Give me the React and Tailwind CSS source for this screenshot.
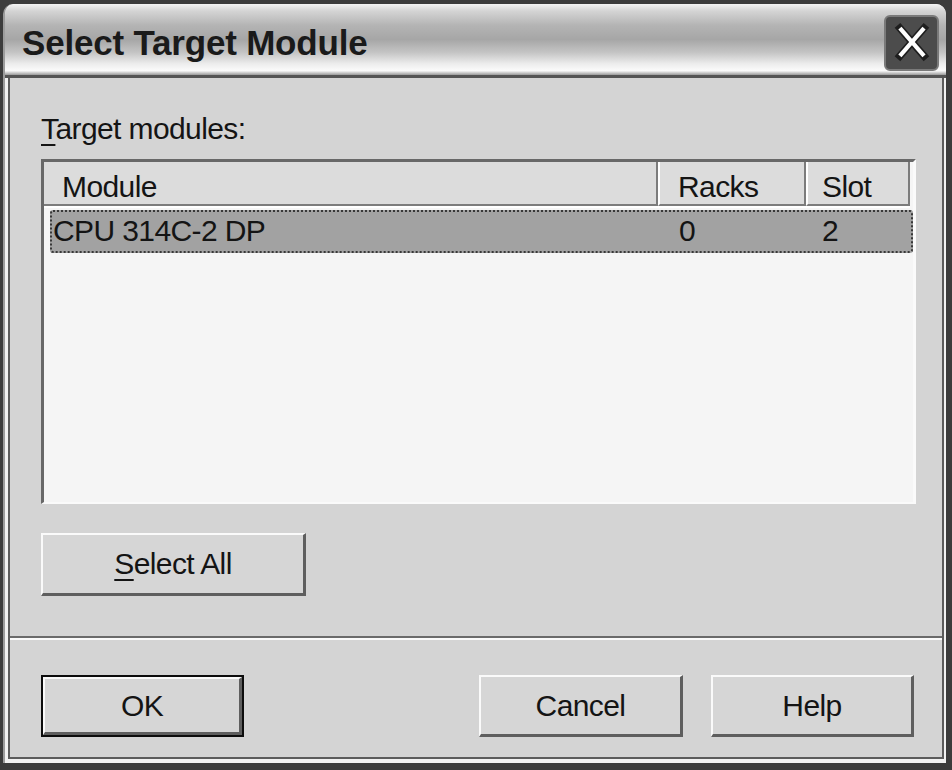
import React from 'react';

const btn3d =
  'flex items-center justify-center bg-[#d6d6d6] border-t-2 border-l-2 border-t-[#fafafa] border-l-[#fafafa] border-r-[3px] border-b-[3px] border-r-[#5e5e5e] border-b-[#5e5e5e]';

const CloseIcon = () => (
  <svg width="55" height="56" viewBox="0 0 55 56">
    <line x1="15" y1="12" x2="41" y2="42" stroke="#1e1e1e" strokeWidth="8" strokeLinecap="square" />
    <line x1="41" y1="12" x2="15" y2="42" stroke="#1e1e1e" strokeWidth="8" strokeLinecap="square" />
    <line x1="15" y1="12" x2="41" y2="42" stroke="#ffffff" strokeWidth="4.5" />
    <line x1="41" y1="12" x2="15" y2="42" stroke="#ffffff" strokeWidth="4.5" />
  </svg>
);

const App = () => {
  return (
    <div className="w-[952px] h-[770px] bg-[#3c3c3c] pt-[4px] pl-[3px] pr-[6px] pb-[7px] font-['Liberation_Sans',Arial,sans-serif] text-[#141414] overflow-hidden">
      <div className="h-full flex flex-col bg-[#f2f2f2] rounded-t-[10px] border-l-2 border-[#9c9c9c]">
        {/* Title bar */}
        <div className="h-[74px] shrink-0 flex items-start justify-between rounded-t-[10px] border-b-[3px] border-[#555555] bg-[linear-gradient(to_bottom,#f4f4f4_0%,#d4d4d4_10%,#b4b4b4_30%,#a6a6a6_50%,#c4c4c4_68%,#ececec_84%,#fbfbfb_94%,#9a9a9a_100%)]">
          <span className="pl-[17px] pt-[19px] text-[35px] leading-[40px] font-bold text-[#1a1a1a] tracking-[-0.2px]">
            Select Target Module
          </span>
          <div className="mt-[11px] mr-[7px] w-[55px] h-[56px] rounded-[6px] bg-[#4c4c4c] border-2 border-[#7a7a7a] flex items-center justify-center overflow-hidden">
            <CloseIcon />
          </div>
        </div>

        {/* Client area */}
        <div className="flex-1 flex flex-col ml-[3px] mr-[2px] mb-[4px] bg-[#d4d4d4] border-l-2 border-r-2 border-b-2 border-[#5c5c5c] text-[30px] tracking-[-0.6px]">
          <div className="mt-[34px] ml-[31px] leading-[34px]">
            <span className="underline underline-offset-[5px] decoration-2">T</span>arget modules:
          </div>

          {/* List box */}
          <div className="mt-[13px] ml-[31px] w-[875px] h-[345px] shrink-0 bg-[#f5f5f5] border-t-[3px] border-l-[3px] border-t-[#686868] border-l-[#686868] border-r-[3px] border-b-[2px] border-r-[#fafafa] border-b-[#fafafa]">
            <div className="flex h-[46px] w-[866px] border-b-2 border-white">
              <div className="w-[614px] h-[44px] bg-[#dcdcdc] border-r-2 border-b-2 border-[#7c7c7c] pl-[18px] pt-[8px] leading-[34px]">
                Module
              </div>
              <div className="w-[148px] h-[44px] bg-[#dcdcdc] border-l-2 border-l-white border-r-2 border-b-2 border-r-[#7c7c7c] border-b-[#7c7c7c] pl-[18px] pt-[8px] leading-[34px]">
                Racks
              </div>
              <div className="w-[104px] h-[44px] bg-[#dcdcdc] border-l-2 border-l-white border-r-2 border-b-2 border-r-[#7c7c7c] border-b-[#7c7c7c] pl-[14px] pt-[8px] leading-[34px]">
                Slot
              </div>
            </div>
            <div className="mt-[2px] ml-[6px] w-[863px] h-[43px] flex rounded-[3px] bg-[#a2a2a2] border-2 border-dotted border-[#383838] pt-[2px] leading-[34px]">
              <span className="w-[627px] pl-[1px]">CPU 314C-2 DP</span>
              <span className="w-[143px]">0</span>
              <span>2</span>
            </div>
          </div>

          <button className={`${btn3d} mt-[29px] ml-[31px] w-[265px] h-[63px] shrink-0 leading-[34px]`}>
            <span>
              <span className="underline underline-offset-[5px] decoration-2">S</span>elect All
            </span>
          </button>

          <div className="mt-[40px] h-[4px] shrink-0 border-t-2 border-[#6a6a6a] border-b-2 border-b-[#fafafa]" />

          <div className="mt-[35px] flex shrink-0">
            <div className="ml-[31px] w-[203px] h-[62px] border-2 border-[#0c0c0c] flex">
              <button className={`${btn3d} flex-1 leading-[34px]`}>OK</button>
            </div>
            <button className={`${btn3d} ml-[235px] w-[204px] h-[62px] leading-[34px]`}>Cancel</button>
            <button className={`${btn3d} ml-[28px] w-[203px] h-[62px] leading-[34px]`}>Help</button>
          </div>
        </div>
      </div>
    </div>
  );
};

export default App;
